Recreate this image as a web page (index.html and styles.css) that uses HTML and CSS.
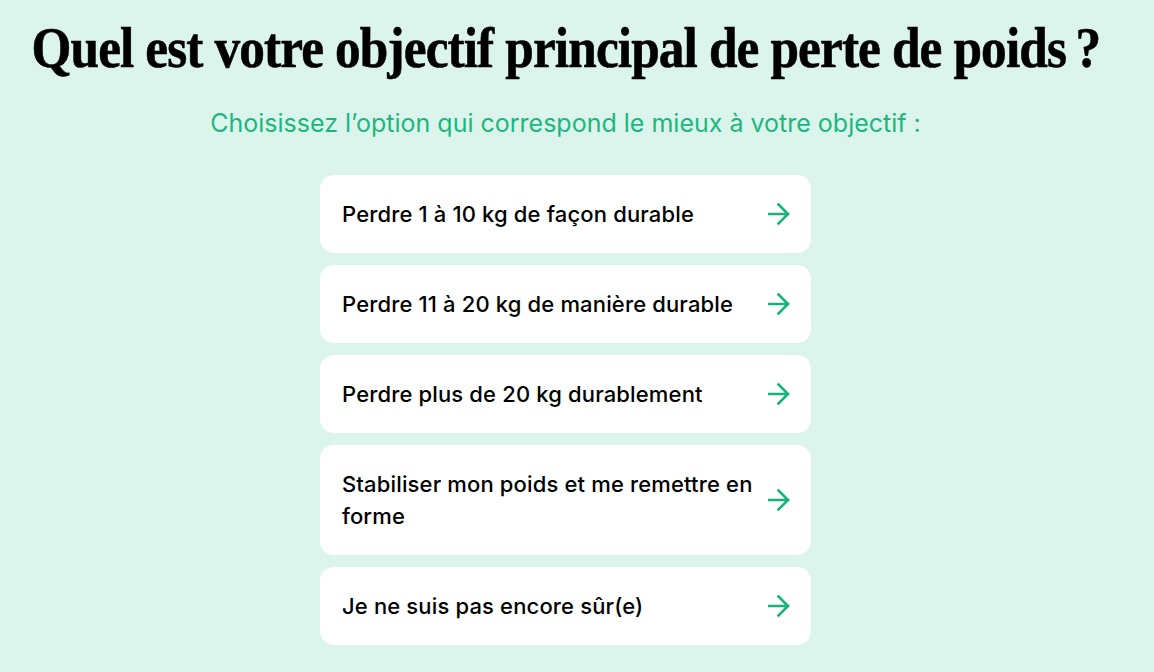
FILE: index.html
```html
<!DOCTYPE html>
<html lang="fr">
<head>
    <meta charset="UTF-8">
    <meta name="viewport" content="width=device-width, initial-scale=1.0">
    <title>Objectif de perte de poids</title>
    <link rel="stylesheet" href="styles.css">
</head>
<body>

    <div class="page">
        <h1 class="title"><span>Quel est votre objectif principal de perte de poids&#8239;?</span></h1>
        <p class="subtitle">Choisissez l’option qui correspond le mieux à votre objectif :</p>

        <div class="options">
            <button class="option">
                <span class="option-text">Perdre 1 à 10 kg de façon durable</span>
                <svg class="arrow" viewBox="0 0 22 22"><path d="M1 11h19M10.5 1.5 20 11l-9.5 9.5"/></svg>
            </button>
            <button class="option">
                <span class="option-text">Perdre 11 à 20 kg de manière durable</span>
                <svg class="arrow" viewBox="0 0 22 22"><path d="M1 11h19M10.5 1.5 20 11l-9.5 9.5"/></svg>
            </button>
            <button class="option">
                <span class="option-text">Perdre plus de 20 kg durablement</span>
                <svg class="arrow" viewBox="0 0 22 22"><path d="M1 11h19M10.5 1.5 20 11l-9.5 9.5"/></svg>
            </button>
            <button class="option">
                <span class="option-text">Stabiliser mon poids et me remettre en forme</span>
                <svg class="arrow" viewBox="0 0 22 22"><path d="M1 11h19M10.5 1.5 20 11l-9.5 9.5"/></svg>
            </button>
            <button class="option">
                <span class="option-text">Je ne suis pas encore sûr(e)</span>
                <svg class="arrow" viewBox="0 0 22 22"><path d="M1 11h19M10.5 1.5 20 11l-9.5 9.5"/></svg>
            </button>
        </div>
    </div>

</body>
</html>
```

FILE: styles.css
```css
/* Page */
body {
    margin: 0;
    background: #dcf5ec;
    font-family: Inter, "Noto Sans", sans-serif;
    color: #000;
    overflow: hidden;
}

.page {
    width: 1131px;
    padding-top: 13px;
    text-align: center;
}

/* Heading */
.title {
    margin: 0;
    display: flex;
    justify-content: center;
    font-family: "Liberation Serif", serif;
    font-size: 58px;
    font-weight: bold;
    line-height: 70px;
    letter-spacing: -1px;
    white-space: nowrap;
    -webkit-text-stroke: 0.6px #000;
}

.title span {
    flex: none;
    transform: scaleX(0.885);
}

.subtitle {
    margin: 25px 0 0;
    font-size: 25px;
    line-height: 30px;
    color: #1cb77e;
}

/* Options */
.options {
    width: 491px;
    margin: 37px auto 0;
    display: flex;
    flex-direction: column;
    gap: 12px;
}

.option {
    display: flex;
    align-items: center;
    justify-content: space-between;
    gap: 8px;
    padding: 23px 21px 23px 22px;
    background: #fff;
    border: none;
    border-radius: 14px;
    font-family: inherit;
    text-align: left;
    cursor: pointer;
}

.option-text {
    font-size: 22px;
    font-weight: 500;
    line-height: 32px;
    letter-spacing: 0.15px;
    color: #000;
}

.arrow {
    flex: none;
    width: 22px;
    height: 22px;
    fill: none;
    stroke: #16b47a;
    stroke-width: 2.6;
    stroke-linecap: square;
}
```
